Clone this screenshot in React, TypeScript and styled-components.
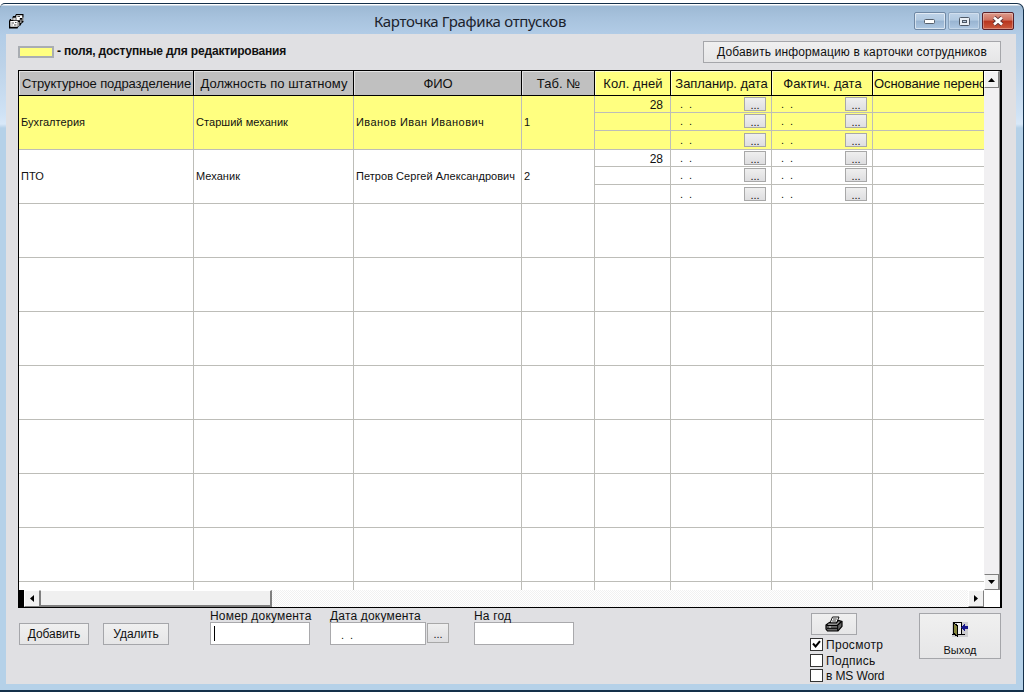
import React from 'react';
import styled, { createGlobalStyle, css } from 'styled-components';

const Global = createGlobalStyle`
  * { box-sizing: border-box; }
  html, body { margin: 0; background: #fff; }
  body { font-family: "Liberation Sans", Arial, sans-serif; font-size: 12px; color: #111; overflow: hidden; }
  button, input { font-family: inherit; }
`;

const Page = styled.div`
  width: 1024px;
  height: 693px;
  padding-top: 3px;
  background: #fff;
`;

const Frame = styled.div`
  width: 1024px;
  height: 689px;
  display: flex;
  flex-direction: column;
  border: solid #14304a;
  border-width: 1px 1px 2px 0;
  border-radius: 5px 7px 0 0;
  padding: 0 7px 6px 6px;
  background: linear-gradient(180deg, #fff 0, #fff 1px, #9db9d4 2px, #a8c3de 15px, #b3cde7 32px, #bcd2e8 60px, #cfe2f5 110px, #d8e8f8 120px, #b5d1e8 124px, #b5d1e8 100%);
`;

const TitleBar = styled.header`
  height: 30px;
  flex: none;
  display: flex;
  align-items: center;
  padding: 4px 2px 0 2px;
`;

const TitleText = styled.h1`
  flex: 1;
  margin: 0;
  padding: 0 0 0 0;
  text-align: center;
  font: 400 15px/20px "Noto Sans", "Open Sans", sans-serif;
  letter-spacing: -0.32px;
  color: #1b222c;
`;

const Controls = styled.div`
  display: flex;
  gap: 2px;
`;

const ControlButton = styled.button<{ $kind: 'plain' | 'faint' | 'close' }>`
  width: 32px;
  height: 18px;
  padding: 0;
  display: grid;
  place-items: center;
  border-radius: 2px;
  border: 1px solid ${p => (p.$kind === 'close' ? '#5a2028' : p.$kind === 'plain' ? '#6f88a4' : '#8ba4be')};
  box-shadow: inset 0 0 0 1px rgba(255, 255, 255, ${p => (p.$kind === 'plain' ? 0.55 : 0.3)});
  background: ${p =>
    p.$kind === 'close'
      ? 'linear-gradient(180deg, #dd9a8b 0, #cf705e 45%, #b8341d 50%, #cb5a3f 100%)'
      : 'linear-gradient(180deg, #bfd3e8 0, #b1c9e1 45%, #98b4d1 50%, #aec8e2 100%)'};
`;

const Body = styled.main`
  flex: 1;
  min-height: 0;
  background: #e0e0e3;
  padding: 7px 15px 0 12px;
`;

const TopRow = styled.div`
  height: 29px;
  display: flex;
  justify-content: space-between;
  align-items: flex-start;
`;

const Legend = styled.div`
  display: flex;
  align-items: center;
  gap: 3px;
  padding-top: 1px;
  font-size: 12px;
  font-weight: 700;
  line-height: 18px;
  letter-spacing: -0.17px;
`;

const Swatch = styled.span`
  width: 36px;
  height: 12px;
  margin-top: 2px;
  border: 2px solid #a9adb2;
  background: #ffff80;
`;

const PushButton = styled.button<{ $w: number; $h?: number; $spacing?: number }>`
  width: ${p => p.$w}px;
  height: ${p => p.$h ?? 22}px;
  flex: none;
  padding: 0;
  display: flex;
  flex-direction: column;
  align-items: center;
  justify-content: center;
  border: 1px solid #a5a6aa;
  background: linear-gradient(180deg, #f0f0f0, #e6e6e7);
  color: #111;
  font-size: 12px;
  line-height: 14px;
  letter-spacing: ${p => p.$spacing ?? 0}px;
  white-space: nowrap;
`;

const Table = styled.section`
  width: 984px;
  height: 538px;
  border: solid #000;
  border-width: 1px 2px 1px 1px;
  background: #fff;
  display: grid;
  grid-template-columns: 965px 16px;
  grid-template-rows: 519px 17px;
`;

const Grid = styled.div`
  overflow: hidden;
`;

const columns = css`
  display: grid;
  grid-template-columns: 175px 160px 168px 73px 76px 101px 101px 111px;
`;

const HeadRow = styled.div`
  ${columns}
  height: 25px;
  border-bottom: 1px solid #000;
`;

const HeadCell = styled.div<{ $editable?: boolean; $spacing: number }>`
  border-right: 1px solid #000;
  box-shadow: inset 1px 1px 0 ${p => (p.$editable ? '#ffffd0' : '#e4e4e4')};
  background: ${p => (p.$editable ? '#ffff80' : '#c0c0c0')};
  overflow: hidden;
  white-space: nowrap;
  padding-left: 1px;
  text-align: center;
  font-size: 13px;
  line-height: 25px;
  letter-spacing: ${p => p.$spacing}px;
  &:last-child { text-align: left; }
`;

const Row = styled.div<{ $active?: boolean }>`
  ${columns}
  height: 54px;
  background: ${p => (p.$active ? '#ffff80' : '#fff')};
`;

const Cell = styled.div<{ $spacing?: number }>`
  border: solid #bdbdb8;
  border-width: 0 1px 1px 0;
  padding-left: 2px;
  font-size: 11px;
  line-height: 53px;
  letter-spacing: ${p => p.$spacing ?? 0.05}px;
  white-space: nowrap;
  &:last-child { border-right: 0; }
`;

const SplitCell = styled.div`
  display: grid;
  grid-template-rows: 17px 18px 19px;
  border-right: 1px solid #bdbdb8;
  &:last-child { border-right: 0; }
`;

const SubCell = styled.div`
  display: flex;
  justify-content: space-between;
  align-items: flex-start;
  border-bottom: 1px solid #bdbdb8;
  padding: 1px 5px 0 9px;
  &:last-child { padding-top: 2px; }
`;

const Days = styled.span`
  margin-left: auto;
  padding: 1px 2px 0 0;
  font-size: 12px;
  line-height: 15px;
`;

const Dots = styled.span`
  font-size: 11px;
  line-height: 14px;
  word-spacing: 3px;
`;

const PickButton = styled.button<{ $large?: boolean }>`
  width: 22px;
  height: ${p => (p.$large ? 20 : 14)}px;
  margin-top: ${p => (p.$large ? 1 : 0)}px;
  padding: 0;
  border: 1px solid #a8a8a8;
  background: linear-gradient(180deg, #efefef, #dedee0);
  color: #111;
  font-size: 11px;
  line-height: ${p => (p.$large ? 20 : 14)}px;
`;

const VerticalBar = styled.div`
  display: flex;
  flex-direction: column;
  justify-content: space-between;
  background: #f1f0f2;
  border-right: 1px solid #8a8a8a;
`;

const HorizontalBar = styled.div`
  display: flex;
  background: repeating-conic-gradient(#f1f1f1 0 25%, #fff 0 50%) 0 0 / 2px 2px;
`;

const ScrollButton = styled.div<{ $w: number; $h: number }>`
  width: ${p => p.$w}px;
  height: ${p => p.$h}px;
  flex: none;
  display: grid;
  place-items: center;
  background: #f1f1f1;
  border: 1px solid;
  border-color: #fff #808080 #808080 #fff;
`;

const DownButton = styled(ScrollButton)`
  border-top-color: #808080;
`;

const Split = styled.div`
  width: 5px;
  background: #000;
`;

const Thumb = styled.div`
  width: 232px;
  background: #f0f0f0;
  border: solid;
  border-width: 1px 2px 2px 1px;
  border-color: #fff #808080 #808080 #808080;
`;

const Spacer = styled.div`
  flex: 1;
`;

const Footer = styled.footer`
  display: flex;
  align-items: flex-start;
`;

const Actions = styled.div`
  display: flex;
  gap: 14px;
  width: 192px;
  padding: 15px 0 0 1px;
`;

const Field = styled.div<{ $w: number }>`
  width: ${p => p.$w}px;
  padding-top: 1px;
`;

const FieldLabel = styled.label`
  display: block;
  height: 13px;
  font-size: 12px;
  line-height: 14px;
  letter-spacing: 0.18px;
  white-space: nowrap;
`;

const FieldRow = styled.div`
  display: flex;
  align-items: flex-start;
  gap: 1px;
`;

const TextBox = styled.div<{ $w: number }>`
  width: ${p => p.$w}px;
  height: 23px;
  border: 1px solid #a9a9ac;
  background: #fff;
  padding: 3px 0 0 3px;
`;

const Caret = styled.span`
  display: block;
  width: 1px;
  height: 15px;
  background: #000;
`;

const BoxDots = styled(Dots)`
  display: block;
  padding: 2px 0 0 7px;
`;

const Output = styled.div`
  width: 109px;
  padding-top: 5px;
`;

const PrintButton = styled(PushButton)`
  margin-left: 1px;
`;

const Checks = styled.div`
  display: grid;
  grid-template-rows: 16px 15px 15px;
  padding-top: 3px;
`;

const Check = styled.label<{ $spacing: number }>`
  display: flex;
  gap: 3px;
  font-size: 12px;
  line-height: 14px;
  letter-spacing: ${p => p.$spacing}px;
  white-space: nowrap;
`;

const Box = styled.span`
  width: 13px;
  height: 13px;
  display: grid;
  place-items: center;
  border: 1px solid #333;
  background: #fff;
`;

const ExitWrap = styled.div`
  padding-top: 5px;
`;

const ExitButton = styled(PushButton)`
  gap: 6px;
  padding-top: 6px;
  font-size: 11px;
`;

const CardsIcon = () => (
  <svg width="18" height="17" viewBox="0 0 18 17">
    <path d="M1 15.5V8l1-2h2l1-3h2l1-2h7.5v8l-2 1.500-1 2-2 1-1 2z" fill="#000" />
    <path d="M8.300 2.200h6V5h-6zM5.300 4.800h6.500v2.400H5.300zM2.300 8h7.400v5.800H2.300z" fill="#fff" />
    <path d="M3.500 7l.5-1h1M13 6.500l-.2 3.500M15 4.500V8M10.800 9v4" fill="none" stroke="#fff" strokeWidth=".9" />
    <path d="M3.500 10h2.500M7 9.500h1.500M3.500 12h1M6 12h2.500M9.500 3.500H12M6.500 6H9" stroke="#222" strokeWidth=".8" />
  </svg>
);

const PrinterIcon = () => (
  <svg width="18" height="16" viewBox="0 0 18 16">
    <path d="M5 7L7.500 1H14l-2.500 6z" fill="#fff" stroke="#111" />
    <path d="M8 3h3.800M7.200 5h3.800" stroke="#222" strokeWidth=".9" />
    <path d="M1 9l3.500-2.500L6 7h5.500l2-2.500L17 5.500v4.800L13 15H2.500L1 13z" fill="#666" stroke="#000" strokeWidth="1.200" />
    <path d="M1.500 9.500H12.500l4-4" fill="none" stroke="#000" strokeWidth="1.200" />
    <path d="M3 8.200h8.500L14 5.800" fill="none" stroke="#aaa" strokeWidth=".9" />
    <path d="M2 12.300h10.500M12.700 10v5" fill="none" stroke="#000" />
    <path d="M4 11h2" stroke="#ddd" />
  </svg>
);

const ExitIcon = () => (
  <svg width="16" height="15" viewBox="0 0 16 15" shapeRendering="crispEdges">
    <rect width="16" height="15" fill="#cdcdd0" />
    <path d="M1 0h9v13H9V1H1z" fill="#000" />
    <path d="M5 1h4v11H5z" fill="#f2f2f2" />
    <path d="M1 0l5 3v12l-5-3z" fill="#000" />
    <path d="M2 2l3 2v9l-3-2z" fill="#85853c" />
    <path d="M0 12h2v1H0zM6 12h7v1H6z" fill="#000" />
    <path d="M9 5h1V4h1V3h1V2h1v2h3v3h-3v2h-1V8h-1V7h-1V6H9z" fill="#16168c" />
  </svg>
);

const Arrow = ({ d, w, h }: { d: string; w: number; h: number }) => (
  <svg width={w} height={h} viewBox={`0 0 ${w} ${h}`}>
    <path d={d} fill="#000" />
  </svg>
);

const heads: { text: string; editable?: boolean; spacing: number }[] = [
  { text: 'Структурное подразделение', spacing: -0.12 },
  { text: 'Должность по штатному', spacing: 0.02 },
  { text: 'ФИО', spacing: -0.1 },
  { text: 'Таб. №', spacing: 0.05 },
  { text: 'Кол. дней', editable: true, spacing: 0.1 },
  { text: 'Запланир. дата', editable: true, spacing: -0.08 },
  { text: 'Фактич. дата', editable: true, spacing: 0.05 },
  { text: 'Основание переноса', editable: true, spacing: -0.08 },
];

const employees = [
  { unit: 'Бухгалтерия', post: 'Старший механик', name: 'Иванов Иван Иванович', num: '1', days: '28', nameSpacing: 0.44 },
  { unit: 'ПТО', post: 'Механик', name: 'Петров Сергей Александрович', num: '2', days: '28', nameSpacing: 0.04 },
];

const parts = [0, 1, 2];

const DateCell = () => (
  <SplitCell>
    {parts.map(i => (
      <SubCell key={i}>
        <Dots>. .</Dots>
        <PickButton>...</PickButton>
      </SubCell>
    ))}
  </SplitCell>
);

export default function App() {
  return (
    <Page>
      <Global />
      <Frame>
        <TitleBar>
          <CardsIcon />
          <TitleText>Карточка Графика отпусков</TitleText>
          <Controls>
            <ControlButton $kind="plain">
              <svg width="12" height="6"><rect x=".5" y="1.5" width="10" height="4" rx="1" fill="#fff" stroke="#555f6b" /></svg>
            </ControlButton>
            <ControlButton $kind="faint">
              <svg width="11" height="9"><rect x=".5" y=".5" width="10" height="8" rx="1" fill="#e9eff5" stroke="#4e5966" /><rect x="3.5" y="3.5" width="4" height="2" fill="#b5c8dc" stroke="#4e5966" /></svg>
            </ControlButton>
            <ControlButton $kind="close">
              <svg width="12" height="10" viewBox="0 0 12 10"><path d="M2 1.500l8 7m0-7l-8 7" stroke="#5a3034" strokeWidth="4.400" /><path d="M2 1.500l8 7m0-7l-8 7" stroke="#fff" strokeWidth="2.700" /></svg>
            </ControlButton>
          </Controls>
        </TitleBar>
        <Body>
          <TopRow>
            <Legend>
              <Swatch />
              <span>- поля, доступные для редактирования</span>
            </Legend>
            <PushButton $w={298} $spacing={0.13}>Добавить информацию в карточки сотрудников</PushButton>
          </TopRow>
          <Table>
            <Grid>
              <HeadRow>
                {heads.map(h => (
                  <HeadCell key={h.text} $editable={h.editable} $spacing={h.spacing}>{h.text}</HeadCell>
                ))}
              </HeadRow>
              {employees.map((e, i) => (
                <Row key={e.num} $active={i === 0}>
                  <Cell>{e.unit}</Cell>
                  <Cell>{e.post}</Cell>
                  <Cell $spacing={e.nameSpacing}>{e.name}</Cell>
                  <Cell>{e.num}</Cell>
                  <SplitCell>
                    <SubCell><Days>{e.days}</Days></SubCell>
                    <SubCell />
                    <SubCell />
                  </SplitCell>
                  <DateCell />
                  <DateCell />
                  <SplitCell>{parts.map(k => <SubCell key={k} />)}</SplitCell>
                </Row>
              ))}
              {Array.from({ length: 8 }, (_, i) => (
                <Row key={i}>{heads.map(h => <Cell key={h.text} />)}</Row>
              ))}
            </Grid>
            <VerticalBar>
              <ScrollButton $w={15} $h={17}><Arrow w={7} h={4} d="M0 4L3.5 0 7 4z" /></ScrollButton>
              <DownButton $w={15} $h={16}><Arrow w={7} h={4} d="M0 0h7L3.5 4z" /></DownButton>
            </VerticalBar>
            <HorizontalBar>
              <Split />
              <ScrollButton $w={16} $h={17}><Arrow w={4} h={7} d="M4 0v7L0 3.5z" /></ScrollButton>
              <Thumb />
              <Spacer />
              <ScrollButton $w={16} $h={17}><Arrow w={4} h={7} d="M0 0l4 3.5L0 7z" /></ScrollButton>
            </HorizontalBar>
          </Table>
          <Footer>
            <Actions>
              <PushButton $w={70} $spacing={-0.08}>Добавить</PushButton>
              <PushButton $w={66} $spacing={-0.08}>Удалить</PushButton>
            </Actions>
            <Field $w={120}>
              <FieldLabel>Номер документа</FieldLabel>
              <TextBox $w={100}><Caret /></TextBox>
            </Field>
            <Field $w={144}>
              <FieldLabel>Дата документа</FieldLabel>
              <FieldRow>
                <TextBox $w={96}><BoxDots>. .</BoxDots></TextBox>
                <PickButton $large>...</PickButton>
              </FieldRow>
            </Field>
            <Field $w={100}>
              <FieldLabel>На год</FieldLabel>
              <TextBox $w={100} />
            </Field>
            <Spacer />
            <Output>
              <PrintButton $w={46}><PrinterIcon /></PrintButton>
              <Checks>
                <Check $spacing={0.3}><Box><svg width="9" height="9"><path d="M1 3.5l2.6 3L8 1.2" fill="none" stroke="#000" strokeWidth="2" /></svg></Box>Просмотр</Check>
                <Check $spacing={0.3}><Box />Подпись</Check>
                <Check $spacing={-0.12}><Box />в MS Word</Check>
              </Checks>
            </Output>
            <ExitWrap>
              <ExitButton $w={82} $h={46}><ExitIcon />Выход</ExitButton>
            </ExitWrap>
          </Footer>
        </Body>
      </Frame>
    </Page>
  );
}
